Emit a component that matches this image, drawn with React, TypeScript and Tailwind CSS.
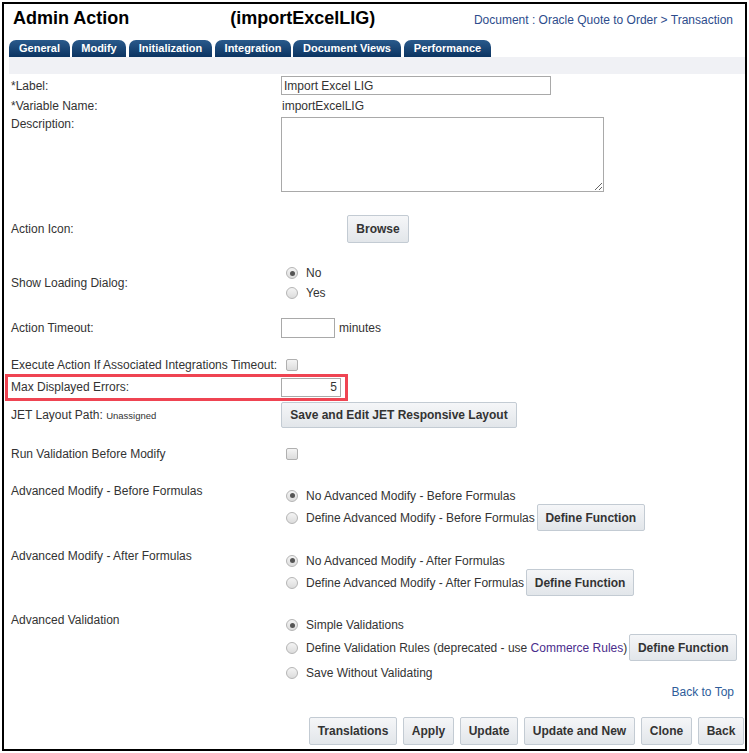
const font = { fontFamily: '"Liberation Sans", Arial, sans-serif' };

const tabs = [
  { name: "General", w: "w-[61px]", ml: "ml-0" },
  { name: "Modify", w: "w-[54px]", ml: "ml-[2px]" },
  { name: "Initialization", w: "w-[83px]", ml: "ml-[3px]" },
  { name: "Integration", w: "w-[76px]", ml: "ml-[3px]" },
  { name: "Document Views", w: "w-[108px]", ml: "ml-[2px]" },
  { name: "Performance", w: "w-[87px]", ml: "ml-[3px]" },
];

function Radio({ checked }: { checked?: boolean }) {
  return (
    <span className="ml-[5px] mr-[8px] w-[12px] h-[12px] rounded-full border border-[#b5b5b5] bg-gradient-to-b from-[#f4f4f4] to-[#dcdcdc] flex items-center justify-center shrink-0">
      {checked && <span className="w-[5px] h-[5px] rounded-full bg-[#555]" />}
    </span>
  );
}

function Checkbox() {
  return (
    <span className="ml-[5px] w-[12px] h-[12px] rounded-[2px] border border-[#b0b0b0] bg-gradient-to-b from-[#f4f4f4] to-[#dcdcdc] inline-block" />
  );
}

function Btn({ children, className = "" }: { children: React.ReactNode; className?: string }) {
  return (
    <button className={`flex items-center justify-center rounded-[2px] border border-[#c3cbd3] bg-gradient-to-b from-[#f5f6f8] to-[#e2e6ea] text-[12px] font-bold text-[#333] ${className}`}>
      {children}
    </button>
  );
}

function Label({ children }: { children: React.ReactNode }) {
  return <div className="w-[270px] shrink-0 leading-[14px]">{children}</div>;
}

export default function App() {
  return (
    <div className="bg-white w-[749px] h-[753px] pt-[2px] pl-[2px] text-[12px] text-[#333]" style={font}>
      <div className="w-[745px] h-[749px] border-2 border-black flex flex-col">
        {/* Header */}
        <div className="h-[36px] flex items-start pt-[3px]">
          <span className="ml-[9px] text-[18px] font-bold text-black leading-[22px]">Admin Action</span>
          <span className="ml-[101px] text-[18px] font-bold text-black leading-[22px]">(importExcelLIG)</span>
          <span className="ml-auto mr-[12px] mt-[4px] text-[12px] text-[#2d4c8c]">
            Document : Oracle Quote to Order &gt; Transaction
          </span>
        </div>

        {/* Tabs */}
        <div className="flex items-end pl-[5px] h-[17px]">
          {tabs.map((t) => (
            <div
              key={t.name}
              className={`${t.w} ${t.ml} h-[17px] rounded-t-[7px] bg-gradient-to-b from-[#2a5a8c] to-[#0b3461] text-white font-bold text-[11px] flex items-center justify-center`}
            >
              {t.name}
            </div>
          ))}
        </div>
        <div className="ml-[5px] h-[17px] bg-[#f0f1f5]" />

        {/* Form */}
        <div className="pl-[7px] flex flex-col">
          <div className="h-[23px] flex items-center">
            <Label>*Label:</Label>
            <input
              defaultValue="Import Excel LIG"
              className="w-[270px] h-[19px] border border-[#a9a9a9] px-[2px] text-[12px] text-[#333] outline-none"
            />
          </div>
          <div className="h-[18px] flex items-center">
            <Label>*Variable Name:</Label>
            <span className="ml-[1px]">importExcelLIG</span>
          </div>
          <div className="h-[79px] flex items-start">
            <div className="pt-[2px]">
              <Label>Description:</Label>
            </div>
            <textarea className="mt-[2px] w-[323px] h-[75px] border border-[#a9a9a9] outline-none" />
          </div>

          <div className="mt-[19px] h-[32px] flex items-center">
            <Label>Action Icon:</Label>
            <Btn className="ml-[66px] w-[62px] h-[28px]">Browse</Btn>
          </div>

          <div className="mt-[18px] h-[40px] flex items-center">
            <Label>Show Loading Dialog:</Label>
            <div className="flex flex-col">
              <div className="h-[20px] flex items-center">
                <Radio checked />
                No
              </div>
              <div className="h-[20px] flex items-center">
                <Radio />
                Yes
              </div>
            </div>
          </div>

          <div className="mt-[14px] h-[22px] flex items-center">
            <Label>Action Timeout:</Label>
            <input className="w-[54px] h-[20px] border border-[#a9a9a9] outline-none" />
            <span className="ml-[4px]">minutes</span>
          </div>

          <div className="mt-[17px] h-[18px] flex items-center">
            <Label>Execute Action If Associated Integrations Timeout:</Label>
            <Checkbox />
          </div>

          <div className="relative mt-[2px] h-[22px] flex items-center">
            <Label>Max Displayed Errors:</Label>
            <input
              defaultValue="5"
              className="w-[60px] h-[19px] border border-[#a9a9a9] px-[3px] text-right text-[12px] text-[#333] outline-none"
            />
            <div className="absolute left-[-6px] top-[-2px] w-[343px] h-[27px] border-[3px] border-[#ef4452]" />
          </div>

          <div className="mt-[4px] h-[26px] flex items-center">
            <Label>
              JET Layout Path: <span className="text-[9.5px]">Unassigned</span>
            </Label>
            <Btn className="w-[236px] h-[26px]">Save and Edit JET Responsive Layout</Btn>
          </div>

          <div className="mt-[17px] h-[18px] flex items-center">
            <Label>Run Validation Before Modify</Label>
            <span className="mt-[4px]">
              <Checkbox />
            </span>
          </div>

          <div className="mt-[21px] flex items-start">
            <Label>Advanced Modify - Before Formulas</Label>
            <div className="pt-[3px] flex flex-col">
              <div className="h-[17px] flex items-center">
                <Radio checked />
                No Advanced Modify - Before Formulas
              </div>
              <div className="h-[27px] flex items-center">
                <Radio />
                Define Advanced Modify - Before Formulas
                <Btn className="ml-[2px] w-[108px] h-[27px]">Define Function</Btn>
              </div>
            </div>
          </div>

          <div className="mt-[18px] flex items-start">
            <Label>Advanced Modify - After Formulas</Label>
            <div className="pt-[3px] flex flex-col">
              <div className="h-[17px] flex items-center">
                <Radio checked />
                No Advanced Modify - After Formulas
              </div>
              <div className="h-[27px] flex items-center">
                <Radio />
                Define Advanced Modify - After Formulas
                <Btn className="ml-[2px] w-[108px] h-[27px]">Define Function</Btn>
              </div>
            </div>
          </div>

          <div className="mt-[17px] flex items-start">
            <Label>Advanced Validation</Label>
            <div className="pt-[3px] flex flex-col">
              <div className="h-[18px] flex items-center">
                <Radio checked />
                Simple Validations
              </div>
              <div className="h-[27px] flex items-center">
                <Radio />
                Define Validation Rules (deprecated - use&nbsp;
                <span className="text-[#4a2c8c]">Commerce Rules</span>)
                <Btn className="ml-[2px] w-[108px] h-[27px]">Define Function</Btn>
              </div>
              <div className="h-[23px] flex items-center">
                <Radio />
                Save Without Validating
              </div>
            </div>
          </div>

          <div className="h-[16px] flex items-center justify-end pr-[11px] text-[#2e5d9a]">Back to Top</div>

          <div className="mt-[17px] flex justify-end gap-[6px] pr-[1px]">
            <Btn className="w-[88px] h-[28px]">Translations</Btn>
            <Btn className="w-[51px] h-[28px]">Apply</Btn>
            <Btn className="w-[58px] h-[28px]">Update</Btn>
            <Btn className="w-[111px] h-[28px]">Update and New</Btn>
            <Btn className="w-[51px] h-[28px]">Clone</Btn>
            <Btn className="w-[46px] h-[28px]">Back</Btn>
          </div>
        </div>
      </div>
    </div>
  );
}
